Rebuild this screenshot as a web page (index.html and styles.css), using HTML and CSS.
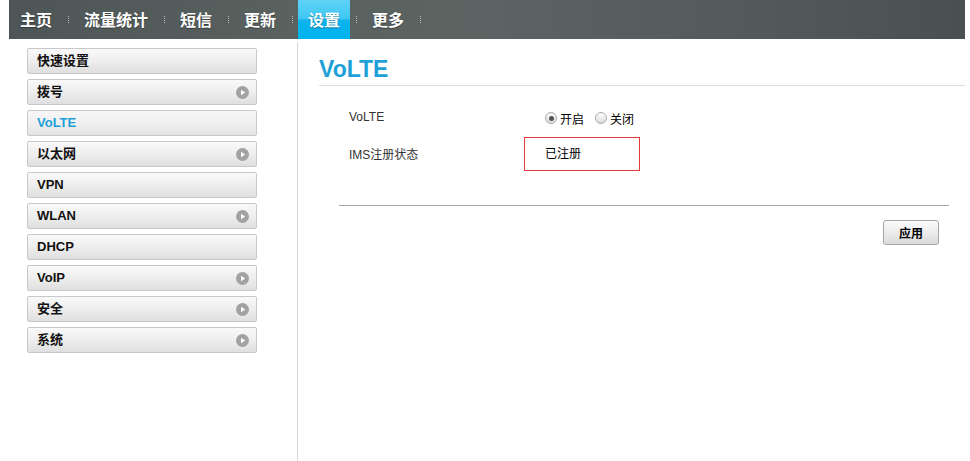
FILE: index.html
```html
<!DOCTYPE html>
<html lang="zh-CN">
<head>
<meta charset="utf-8">
<title>VoLTE</title>
<link rel="stylesheet" href="styles.css">
</head>
<body>
<header class="topbar">
  <nav class="nav">
    <a class="nav-item">主页</a><span class="nav-sep"></span>
    <a class="nav-item">流量统计</a><span class="nav-sep"></span>
    <a class="nav-item">短信</a><span class="nav-sep"></span>
    <a class="nav-item">更新</a><span class="nav-sep"></span>
    <a class="nav-item active">设置</a><span class="nav-sep"></span>
    <a class="nav-item">更多</a><span class="nav-sep"></span>
  </nav>
</header>
<div class="page">
  <aside class="sidebar">
    <ul class="menu">
      <li class="menu-item">快速设置</li>
      <li class="menu-item">拨号<svg class="arrow" viewBox="0 0 13 13"><circle cx="6.5" cy="6.5" r="6.5" fill="#a2a2a2"/><path d="M5 3.8 L5 9.2 L9.2 6.5 Z" fill="#fff"/></svg></li>
      <li class="menu-item current">VoLTE</li>
      <li class="menu-item">以太网<svg class="arrow" viewBox="0 0 13 13"><circle cx="6.5" cy="6.5" r="6.5" fill="#a2a2a2"/><path d="M5 3.8 L5 9.2 L9.2 6.5 Z" fill="#fff"/></svg></li>
      <li class="menu-item">VPN</li>
      <li class="menu-item">WLAN<svg class="arrow" viewBox="0 0 13 13"><circle cx="6.5" cy="6.5" r="6.5" fill="#a2a2a2"/><path d="M5 3.8 L5 9.2 L9.2 6.5 Z" fill="#fff"/></svg></li>
      <li class="menu-item">DHCP</li>
      <li class="menu-item">VoIP<svg class="arrow" viewBox="0 0 13 13"><circle cx="6.5" cy="6.5" r="6.5" fill="#a2a2a2"/><path d="M5 3.8 L5 9.2 L9.2 6.5 Z" fill="#fff"/></svg></li>
      <li class="menu-item">安全<svg class="arrow" viewBox="0 0 13 13"><circle cx="6.5" cy="6.5" r="6.5" fill="#a2a2a2"/><path d="M5 3.8 L5 9.2 L9.2 6.5 Z" fill="#fff"/></svg></li>
      <li class="menu-item">系统<svg class="arrow" viewBox="0 0 13 13"><circle cx="6.5" cy="6.5" r="6.5" fill="#a2a2a2"/><path d="M5 3.8 L5 9.2 L9.2 6.5 Z" fill="#fff"/></svg></li>
    </ul>
  </aside>
  <main class="main">
    <h1 class="title">VoLTE</h1>
    <div class="form">
      <div class="form-label">VoLTE</div>
      <div class="form-value">
        <span class="radio checked"></span><span class="radio-text">开启</span>
        <span class="radio"></span><span class="radio-text">关闭</span>
      </div>
      <div class="form-label">IMS注册状态</div>
      <div class="form-value status-cell"><span class="status-box">已注册</span></div>
    </div>
    <div class="divider"></div>
    <div class="actions"><button class="btn">应用</button></div>
  </main>
</div>
</body>
</html>
```
FILE: styles.css
```css
html, body {
  margin: 0;
  padding: 0;
  background: #fff;
}
body {
  font-family: "Liberation Sans", "Noto Sans CJK SC", sans-serif;
  color: #000;
}
.topbar {
  margin-left: 9px;
  width: 956px;
  height: 39px;
  background: linear-gradient(to right, #4e5557 0%, #59625f 30%, #5b6462 50%, #535b5b 75%, #4a5052 100%);
}
.nav {
  display: flex;
  align-items: center;
  height: 39px;
  padding-left: 1px;
}
.nav-item {
  display: block;
  height: 39px;
  line-height: 39px;
  padding: 0 10px;
  color: #fff;
  font-family: "Noto Sans CJK SC", sans-serif;
  font-weight: 700;
  font-size: 16px;
  text-shadow: 0 1px 1px rgba(0,0,0,0.35);
  cursor: pointer;
}
.nav-item.active {
  background: linear-gradient(to bottom, #5fd2f6 0%, #3ec6f2 48%, #0cb4ef 52%, #00b3ef 100%);
}
.nav-sep {
  width: 12px;
  height: 7px;
  display: flex;
  justify-content: center;
}
.nav-sep::before {
  content: "";
  width: 0;
  height: 7px;
  border-left: 1px dotted #b5b9b8;
}
.page {
  display: flex;
  margin-left: 9px;
  width: 956px;
  padding-top: 3px;
}
.sidebar {
  width: 288px;
  box-sizing: border-box;
  padding: 6px 40px 0 18px;
  flex: none;
}
.menu {
  list-style: none;
  margin: 0;
  padding: 0;
  display: flex;
  flex-direction: column;
  gap: 5px;
}
.menu-item {
  height: 26px;
  box-sizing: border-box;
  border: 1px solid #c8c8c8;
  border-radius: 2px;
  background: linear-gradient(to bottom, #f9f9f9 0%, #eeeeee 50%, #dfdfdf 100%);
  display: flex;
  align-items: center;
  justify-content: space-between;
  padding: 0 7px 0 9px;
  font-size: 13px;
  font-weight: 700;
  line-height: 24px;
  color: #111;
}
.menu-item.current {
  color: #1e9fd8;
  background: linear-gradient(to bottom, #f7f7f7 0%, #f0f0f0 50%, #e3e3e3 100%);
}
.arrow {
  width: 13px;
  height: 13px;
  display: block;
}
.main {
  flex: 1;
  border-left: 1px solid #d6d6d6;
  padding-left: 21px;
  height: calc(100vh - 42px);
  box-sizing: border-box;
}
.title {
  margin: 0;
  padding: 13px 0 2px;
  line-height: 28px;
  font-size: 23px;
  font-weight: 700;
  color: #1fa1d8;
  border-bottom: 1px solid #dcdcdc;
}
.form {
  margin: 14px 0 0 30px;
  display: grid;
  grid-template-columns: 175px auto;
  grid-auto-rows: 34px;
  row-gap: 3px;
  font-size: 12px;
  color: #333;
}
.form-label {
  display: flex;
  align-items: center;
  padding-bottom: 1px;
}
.form-value {
  display: flex;
  align-items: center;
  padding-left: 21px;
  color: #000;
}
.form-value.status-cell {
  padding-left: 0;
}
.radio {
  width: 12px;
  height: 12px;
  box-sizing: border-box;
  border: 1px solid #a9a9a9;
  border-radius: 50%;
  background: linear-gradient(to bottom, #ffffff 0%, #dcdcdc 100%);
  display: flex;
  align-items: center;
  justify-content: center;
  margin-top: 2px;
}
.radio.checked::before {
  content: "";
  width: 5px;
  height: 5px;
  border-radius: 50%;
  background: #555;
}
.radio-text {
  margin-left: 3px;
  margin-right: 11px;
  margin-top: 3px;
}
.status-box {
  width: 116px;
  height: 34px;
  box-sizing: border-box;
  border: 1px solid #e33b3b;
  padding-left: 20px;
  padding-bottom: 3px;
  display: flex;
  align-items: center;
}
.divider {
  margin: 34px 16px 0 20px;
  height: 1px;
  background: #a4a4a4;
}
.actions {
  display: flex;
  justify-content: flex-end;
  padding-right: 26px;
  margin-top: 14px;
}
.btn {
  width: 56px;
  height: 25px;
  border: 1px solid #a6a6a6;
  border-radius: 3px;
  background: linear-gradient(to bottom, #fbfbfb 0%, #ececec 50%, #dadada 100%);
  font-family: "Liberation Sans", "Noto Sans CJK SC", sans-serif;
  font-size: 12px;
  font-weight: 700;
  color: #000;
  padding: 0;
  cursor: pointer;
}
```
